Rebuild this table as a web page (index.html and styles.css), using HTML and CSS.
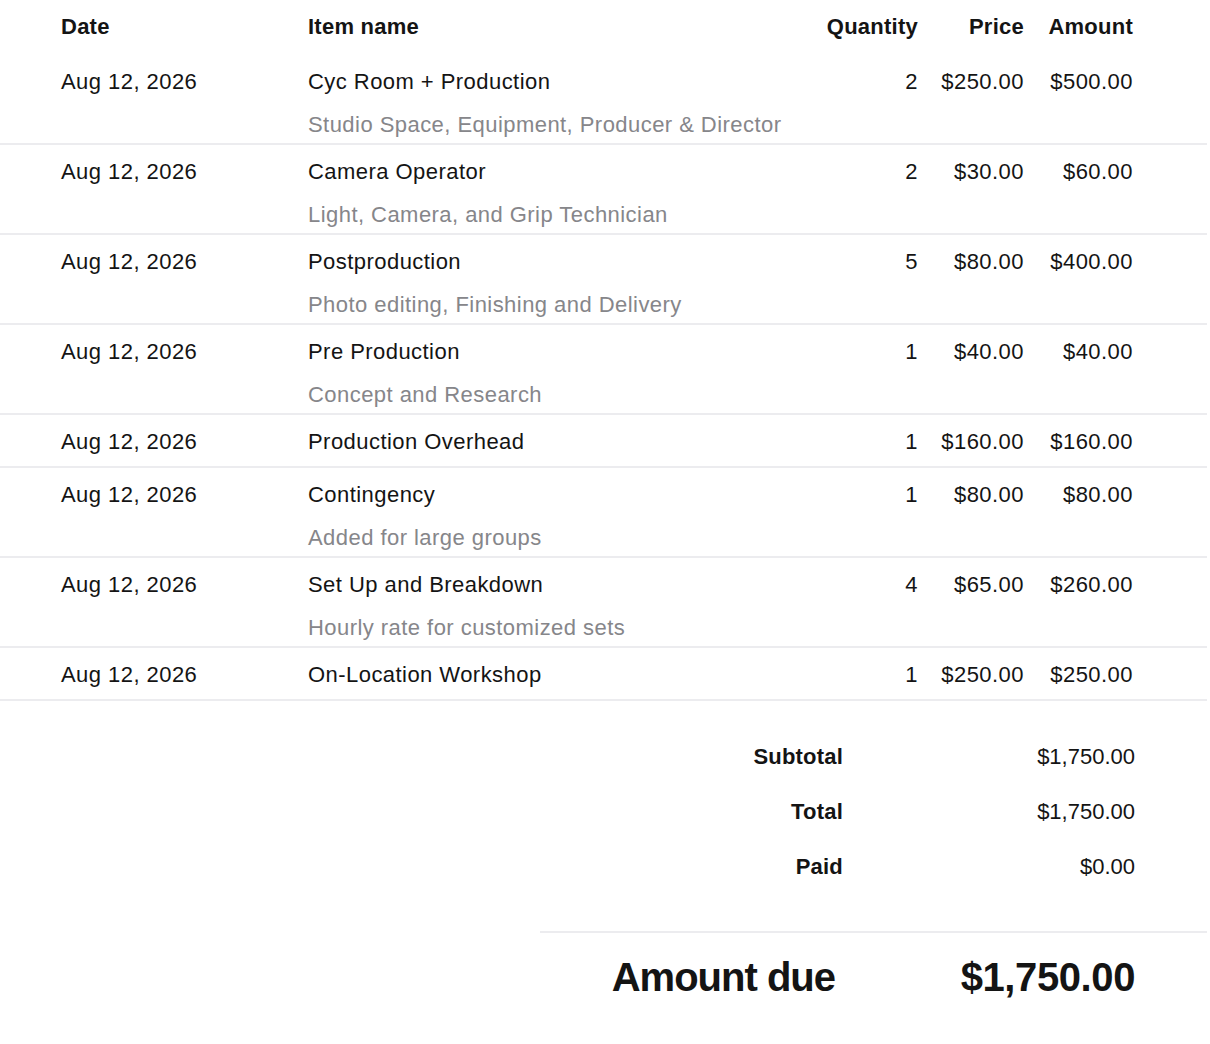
FILE: index.html
```html
<!DOCTYPE html>
<html lang="en">
<head>
<meta charset="utf-8">
<title>Invoice</title>
<link rel="stylesheet" href="styles.css">
</head>
<body>
<div class="invoice">
  <div class="items">
    <div class="row head">
      <div class="c-date">Date</div>
      <div class="c-item">Item name</div>
      <div class="c-num">Quantity</div>
      <div class="c-num">Price</div>
      <div class="c-num">Amount</div>
    </div>
    <div class="row line">
      <div class="c-date">Aug 12, 2026</div>
      <div class="c-item">Cyc Room + Production</div>
      <div class="c-num">2</div>
      <div class="c-num">$250.00</div>
      <div class="c-num">$500.00</div>
      <div class="sub">Studio Space, Equipment, Producer &amp; Director</div>
    </div>
    <div class="row line">
      <div class="c-date">Aug 12, 2026</div>
      <div class="c-item">Camera Operator</div>
      <div class="c-num">2</div>
      <div class="c-num">$30.00</div>
      <div class="c-num">$60.00</div>
      <div class="sub">Light, Camera, and Grip Technician</div>
    </div>
    <div class="row line">
      <div class="c-date">Aug 12, 2026</div>
      <div class="c-item">Postproduction</div>
      <div class="c-num">5</div>
      <div class="c-num">$80.00</div>
      <div class="c-num">$400.00</div>
      <div class="sub">Photo editing, Finishing and Delivery</div>
    </div>
    <div class="row line">
      <div class="c-date">Aug 12, 2026</div>
      <div class="c-item">Pre Production</div>
      <div class="c-num">1</div>
      <div class="c-num">$40.00</div>
      <div class="c-num">$40.00</div>
      <div class="sub">Concept and Research</div>
    </div>
    <div class="row line">
      <div class="c-date">Aug 12, 2026</div>
      <div class="c-item">Production Overhead</div>
      <div class="c-num">1</div>
      <div class="c-num">$160.00</div>
      <div class="c-num">$160.00</div>
    </div>
    <div class="row line">
      <div class="c-date">Aug 12, 2026</div>
      <div class="c-item">Contingency</div>
      <div class="c-num">1</div>
      <div class="c-num">$80.00</div>
      <div class="c-num">$80.00</div>
      <div class="sub">Added for large groups</div>
    </div>
    <div class="row line">
      <div class="c-date">Aug 12, 2026</div>
      <div class="c-item">Set Up and Breakdown</div>
      <div class="c-num">4</div>
      <div class="c-num">$65.00</div>
      <div class="c-num">$260.00</div>
      <div class="sub">Hourly rate for customized sets</div>
    </div>
    <div class="row line">
      <div class="c-date">Aug 12, 2026</div>
      <div class="c-item">On-Location Workshop</div>
      <div class="c-num">1</div>
      <div class="c-num">$250.00</div>
      <div class="c-num">$250.00</div>
    </div>
  </div>

  <div class="totals">
    <div class="sum">
      <div class="t-label">Subtotal</div>
      <div class="t-value">$1,750.00</div>
      <div class="t-label">Total</div>
      <div class="t-value">$1,750.00</div>
      <div class="t-label">Paid</div>
      <div class="t-value">$0.00</div>
    </div>
    <div class="due">
      <div class="due-label">Amount due</div>
      <div class="due-value">$1,750.00</div>
    </div>
  </div>
</div>
</body>
</html>
```
FILE: styles.css
```css
html, body {
  margin: 0;
  padding: 0;
  background: #ffffff;
}

body {
  font-family: "Liberation Sans", Arial, sans-serif;
  color: #141414;
  font-size: 22px;
}

.invoice {
  width: 1207px;
}

.row {
  display: grid;
  grid-template-columns: 247px 490px 120px 106px 109px;
  padding: 12px 74px 9px 61px;
  line-height: 30px;
  letter-spacing: 0.45px;
}

.head {
  font-weight: 700;
  padding-bottom: 13px;
  letter-spacing: 0.25px;
}

.line {
  border-bottom: 2px solid #ececef;
}

.c-num {
  text-align: right;
}

.sub {
  grid-column: 2 / 4;
  color: #86868a;
  margin-top: 13px;
  margin-bottom: -6px;
  white-space: nowrap;
}

.totals {
  margin-left: 540px;
  width: 667px;
}

.sum {
  display: grid;
  grid-template-columns: 303px 292px;
  row-gap: 25px;
  line-height: 30px;
  padding: 41px 0 49px;
}

.t-label {
  font-weight: 700;
  text-align: right;
  letter-spacing: 0.2px;
}

.t-value {
  text-align: right;
  letter-spacing: 0;
}

.due {
  border-top: 2px solid #ececef;
  display: grid;
  grid-template-columns: 295px 300px;
  padding-top: 20px;
  line-height: 48px;
  font-size: 40px;
  font-weight: 700;
}

.due-label,
.due-value {
  text-align: right;
}

.due-label {
  letter-spacing: -1px;
}

.due-value {
  letter-spacing: -0.4px;
}
```
